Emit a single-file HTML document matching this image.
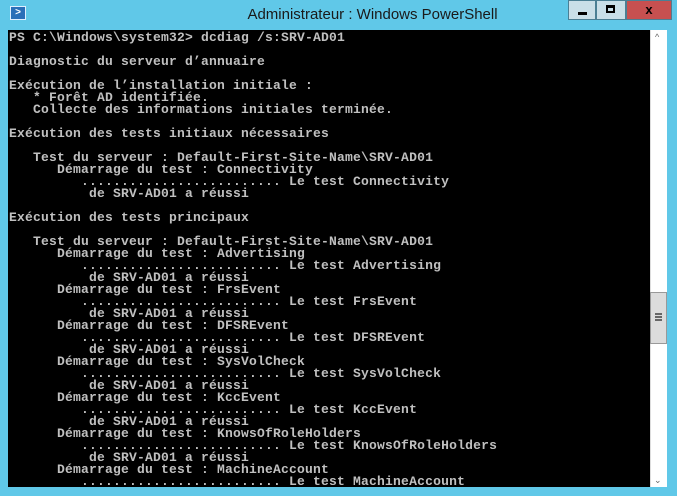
<!DOCTYPE html>
<html><head><meta charset="utf-8"><style>
html,body{margin:0;padding:0;}
body{width:677px;height:496px;background:#60c8e8;position:relative;overflow:hidden;font-family:"Liberation Sans",sans-serif;}
.title{position:absolute;left:0;top:0;width:677px;height:30px;text-align:center;line-height:30px;font-size:15px;color:#1a1a1a;}
.title span{position:relative;left:34px;}
.icon{position:absolute;left:10px;top:6px;width:16px;height:14px;background:#2a6fb8;border:1px solid #dfefff;box-sizing:border-box;color:#fff;font-size:10px;line-height:12px;text-align:center;font-weight:bold;}
.btn{position:absolute;top:0;height:20px;background:#c9dfe8;border:1px solid #4a7f94;box-sizing:border-box;}
.close{background:#c75050;}
.con{position:absolute;left:8px;top:30px;width:642px;height:457px;background:#000;overflow:hidden;}
pre{margin:0;padding:2px 0 0 1px;font-family:"Liberation Mono",monospace;font-size:13px;letter-spacing:0.2px;line-height:12px;color:#c0c0c0;font-weight:bold;}
.sb{position:absolute;left:650px;top:30px;width:17px;height:457px;background:#fff;border-left:1px solid #ddd;box-sizing:border-box;}
.thumb{position:absolute;left:650px;top:292px;width:17px;height:52px;background:#dcdcdc;border:1px solid #999;box-sizing:border-box;}
</style></head><body>
<div class="icon">&gt;</div>
<div class="title"><span>Administrateur : Windows PowerShell</span></div>
<div class="btn" style="left:568px;width:28px;"><div style="position:absolute;left:9px;top:11px;width:9px;height:3px;background:#000"></div></div>
<div class="btn" style="left:596px;width:30px;"><div style="position:absolute;left:9px;top:4px;width:9px;height:8px;border:2px solid #000;border-top-width:3px;box-sizing:border-box"></div></div>
<div class="btn close" style="left:626px;width:46px;color:#000;font-weight:bold;font-size:13px;text-align:center;line-height:18px;">x</div>
<div class="con"><pre>PS C:\Windows\system32&gt; dcdiag /s:SRV-AD01

Diagnostic du serveur d’annuaire

Exécution de l’installation initiale :
   * Forêt AD identifiée.
   Collecte des informations initiales terminée.

Exécution des tests initiaux nécessaires

   Test du serveur : Default-First-Site-Name\SRV-AD01
      Démarrage du test : Connectivity
         ......................... Le test Connectivity
          de SRV-AD01 a réussi

Exécution des tests principaux

   Test du serveur : Default-First-Site-Name\SRV-AD01
      Démarrage du test : Advertising
         ......................... Le test Advertising
          de SRV-AD01 a réussi
      Démarrage du test : FrsEvent
         ......................... Le test FrsEvent
          de SRV-AD01 a réussi
      Démarrage du test : DFSREvent
         ......................... Le test DFSREvent
          de SRV-AD01 a réussi
      Démarrage du test : SysVolCheck
         ......................... Le test SysVolCheck
          de SRV-AD01 a réussi
      Démarrage du test : KccEvent
         ......................... Le test KccEvent
          de SRV-AD01 a réussi
      Démarrage du test : KnowsOfRoleHolders
         ......................... Le test KnowsOfRoleHolders
          de SRV-AD01 a réussi
      Démarrage du test : MachineAccount
         ......................... Le test MachineAccount</pre></div>
<div class="sb"><div style="position:absolute;left:4px;top:2px;font-size:9px;color:#666">^</div><div style="position:absolute;left:3px;bottom:1px;font-size:9px;color:#666">&#8964;</div></div>
<div class="thumb"><div style="position:absolute;left:4px;top:20px;width:7px;height:2px;background:#666;box-shadow:0 3px 0 #666,0 6px 0 #666"></div></div>
</body></html>
